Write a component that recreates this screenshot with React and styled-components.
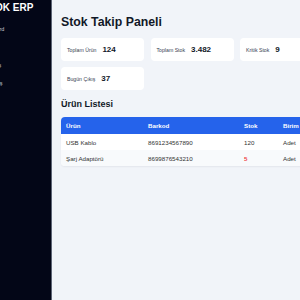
import * as React from 'react';
import styled, { createGlobalStyle } from 'styled-components';

const GlobalStyle = createGlobalStyle`
  html, body {
    margin: 0;
    padding: 0;
    overflow: hidden;
    font-family: "Liberation Sans", Arial, sans-serif;
  }
`;

const stats = [
  { label: 'Toplam Ürün', value: '124' },
  { label: 'Toplam Stok', value: '3.482' },
  { label: 'Kritik Stok', value: '9' },
  { label: 'Bugün Çıkış', value: '37' },
];

const menu = ['Dashboard', 'Ürünler', 'Stok Giriş', 'Stok Çıkış'];

const columns = [
  { title: 'Ürün', width: 82 },
  { title: 'Barkod', width: 96 },
  { title: 'Stok', width: 39 },
  { title: 'Birim', width: 60 },
];

const products = [
  { name: 'USB Kablo', barcode: '8691234567890', stock: 120, unit: 'Adet' },
  { name: 'Şarj Adaptörü', barcode: '8699876543210', stock: 5, unit: 'Adet' },
];

const App = () => {
  return (
    <>
      <GlobalStyle />
      <Layout>
        <Sidebar>
          <Brand>STOK ERP</Brand>
          <Nav>
            {menu.map((item) => (
              <NavItem key={item}>{item}</NavItem>
            ))}
          </Nav>
        </Sidebar>
        <Main>
          <Title>Stok Takip Paneli</Title>
          <Cards>
            {stats.map((s) => (
              <Card key={s.label}>
                <CardLabel>{s.label}</CardLabel>
                <CardValue>{s.value}</CardValue>
              </Card>
            ))}
          </Cards>
          <SubTitle>Ürün Listesi</SubTitle>
          <TableWrap>
            <Table>
              <thead>
                <tr>
                  {columns.map((c) => (
                    <Th key={c.title} $w={c.width}>{c.title}</Th>
                  ))}
                </tr>
              </thead>
              <tbody>
                {products.map((p, idx) => (
                  <Row key={p.barcode} $alt={idx % 2 === 1}>
                    <Td>{p.name}</Td>
                    <Td>{p.barcode}</Td>
                    <Td $critical={p.stock < 10}>{p.stock}</Td>
                    <Td>{p.unit}</Td>
                  </Row>
                ))}
              </tbody>
            </Table>
          </TableWrap>
        </Main>
      </Layout>
    </>
  );
};

const Layout = styled.div`
  display: flex;
  height: 100vh;
  width: 460px;
  background: #f1f4f9;
`;

const Sidebar = styled.aside`
  flex: 0 0 51px;
  overflow: hidden;
  background: #030617;
  border-right: 1px solid #5d6475;
  display: flex;
  flex-direction: column;
`;

const Brand = styled.div`
  margin: 2px 0 0 -17.6px;
  font-size: 10px;
  line-height: 12px;
  font-weight: 700;
  color: #ffffff;
  white-space: nowrap;
`;

const Nav = styled.nav`
  display: flex;
  flex-direction: column;
  margin-top: 10px;
  margin-left: -22.6px;
`;

const NavItem = styled.div`
  height: 18px;
  line-height: 10px;
  font-size: 5.5px;
  color: #c3c8d2;
  white-space: nowrap;
`;

const Main = styled.main`
  flex: 1;
  padding: 15px 9px 0 9px;
`;

const Title = styled.h1`
  margin: 0;
  font-size: 12.3px;
  line-height: 14px;
  font-weight: 700;
  color: #111827;
`;

const Cards = styled.div`
  display: grid;
  grid-template-columns: repeat(3, 83px);
  column-gap: 6.5px;
  row-gap: 6px;
  margin-top: 9px;
`;

const Card = styled.div`
  display: flex;
  align-items: baseline;
  gap: 6px;
  height: 23px;
  box-sizing: border-box;
  padding: 7px 6px;
  background: #ffffff;
  border-radius: 4px;
`;

const CardLabel = styled.span`
  font-size: 5.2px;
  color: #374151;
  white-space: nowrap;
`;

const CardValue = styled.span`
  font-size: 8px;
  line-height: 9px;
  font-weight: 700;
  color: #111827;
`;

const SubTitle = styled.h2`
  margin: 9px 0 0 0;
  font-size: 9px;
  line-height: 10px;
  font-weight: 700;
  color: #111827;
`;

const TableWrap = styled.div`
  margin-top: 8px;
  width: 277px;
  border-radius: 4px;
  overflow: hidden;
  background: #ffffff;
  box-shadow: 0 1px 2px rgba(15, 23, 42, 0.06);
`;

const Table = styled.table`
  width: 100%;
  border-collapse: collapse;
  table-layout: fixed;
  font-size: 6.2px;
`;

const Th = styled.th`
  width: ${(p) => p.$w}px;
  box-sizing: border-box;
  padding: 5px;
  line-height: 7px;
  text-align: left;
  font-weight: 700;
  color: #ffffff;
  background: #2563eb;
`;

const Row = styled.tr`
  background: ${(p) => (p.$alt ? '#f8fafc' : '#ffffff')};
`;

const Td = styled.td`
  padding: 4.5px 5px;
  line-height: 7px;
  color: ${(p) => (p.$critical ? '#ef4444' : '#333333')};
  font-weight: ${(p) => (p.$critical ? 600 : 400)};
`;

export default App;
